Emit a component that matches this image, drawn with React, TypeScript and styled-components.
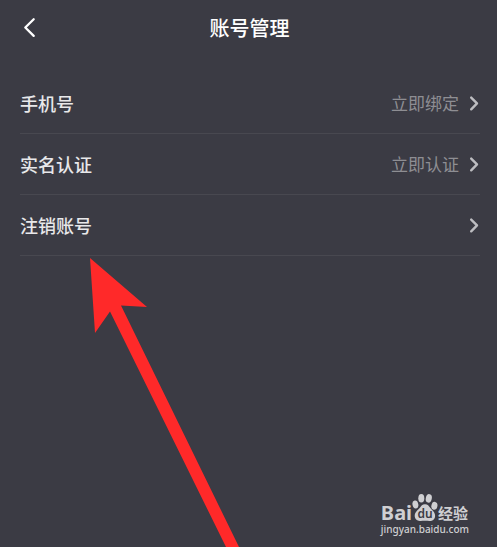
import React from "react";
import styled, { createGlobalStyle } from "styled-components";

const GlobalStyle = createGlobalStyle`
  *, *::before, *::after { box-sizing: border-box; }
  body {
    margin: 0;
    background: #3b3b44;
    font-family: "Noto Sans CJK SC", "Noto Sans", sans-serif;
  }
`;

const Page = styled.main`
  position: relative;
  display: flex;
  flex-direction: column;
  min-height: 100vh;
  overflow: hidden;
  background: #3b3b44;
`;

const Header = styled.header`
  display: grid;
  grid-template-columns: 40px 1fr 40px;
  align-items: center;
  height: 56px;
  padding: 0 8px 0 10px;
`;

const BackButton = styled.button`
  display: flex;
  align-items: center;
  justify-content: center;
  height: 40px;
  padding: 0;
  border: 0;
  background: none;
  color: #ffffff;
  cursor: pointer;
`;

const Title = styled.h1`
  margin: 0;
  color: #ffffff;
  font-size: 20px;
  font-weight: 500;
  line-height: 28px;
  text-align: center;
`;

const List = styled.ul`
  display: flex;
  flex-direction: column;
  margin: 0;
  padding: 17px 17px 0 20px;
  list-style: none;
`;

const Item = styled.li`
  border-bottom: 1px solid #484850;
`;

const RowButton = styled.button`
  display: flex;
  align-items: center;
  width: 100%;
  height: 60px;
  padding: 0;
  border: 0;
  background: none;
  font-family: inherit;
  line-height: 24px;
  text-align: left;
  cursor: pointer;
`;

const Label = styled.span`
  flex: 1;
  color: #e8e8ea;
  font-size: 18px;
  font-weight: 500;
`;

const Hint = styled.span`
  margin-right: 9px;
  color: #8e8e93;
  font-size: 17px;
`;

const Chevron = styled.svg`
  display: block;
  flex: none;
  color: #bdbdc1;
`;

const Pointer = styled.svg`
  position: absolute;
  top: 258px;
  left: 90px;
  pointer-events: none;
`;

const Watermark = styled.footer`
  display: flex;
  flex-direction: column;
  align-items: flex-start;
  align-self: flex-end;
  margin-top: auto;
  padding: 0 28px 11px 0;
  color: #cfcfd2;
`;

const Brand = styled.div`
  display: flex;
  align-items: flex-end;
  height: 29px;
`;

const BrandLatin = styled.span`
  font-family: "Noto Sans", sans-serif;
  font-size: 20px;
  font-weight: 700;
  line-height: 18px;
`;

const BrandChinese = styled.span`
  font-size: 15px;
  font-weight: 700;
  line-height: 18px;
`;

const Paw = styled.svg`
  display: block;
  flex: none;
`;

const Site = styled.a`
  color: inherit;
  font-family: "Noto Sans", sans-serif;
  font-size: 10px;
  font-weight: 500;
  line-height: 14px;
  text-decoration: none;
`;

const rows = [
  { label: "手机号", hint: "立即绑定" },
  { label: "实名认证", hint: "立即认证" },
  { label: "注销账号", hint: "" },
];

export default function App() {
  return (
    <>
      <GlobalStyle />
      <Page>
        <Header>
          <BackButton type="button" aria-label="返回">
            <svg width="14" height="22" viewBox="0 0 14 22" fill="none" aria-hidden="true">
              <path d="M10.7 2.2 2.3 10.5l8.4 8.4" stroke="currentColor" strokeWidth="2.3" strokeLinecap="round" strokeLinejoin="round" />
            </svg>
          </BackButton>
          <Title>账号管理</Title>
        </Header>
        <List>
          {rows.map(({ label, hint }) => (
            <Item key={label}>
              <RowButton type="button">
                <Label>{label}</Label>
                {hint && <Hint>{hint}</Hint>}
                <Chevron width="12" height="16" viewBox="0 0 12 16" fill="none" aria-hidden="true">
                  <path d="M3.2 2.6 9 8.4l-5.8 5.9" stroke="currentColor" strokeWidth="2.4" strokeLinecap="round" strokeLinejoin="round" />
                </Chevron>
              </RowButton>
            </Item>
          ))}
        </List>
        <Watermark>
          <Brand>
            <BrandLatin>Bai</BrandLatin>
            <Paw width="26" height="29" viewBox="0 0 26 29" fill="currentColor" aria-hidden="true">
              <ellipse cx="3.4" cy="11.5" rx="2.9" ry="4" transform="rotate(-12 3.4 11.5)" />
              <ellipse cx="9.3" cy="5.2" rx="3" ry="4.3" />
              <ellipse cx="16.8" cy="5.4" rx="3" ry="4.3" transform="rotate(12 16.8 5.4)" />
              <ellipse cx="22.4" cy="12.8" rx="3" ry="4" transform="rotate(12 22.4 12.8)" />
              <path d="M13 11.2c2.8 0 3.8 1.6 5.1 3.5 1.3 2 5 4 5 8 0 3.4-2.4 5.5-5.6 5.2-2.8-.3-6.2-.3-9 0-3.3.3-5.8-1.8-5.8-5.1 0-3.9 3.7-6 5.2-8.1 1.3-1.9 2.3-3.5 5.1-3.5Z" />
              <text x="13" y="25" textAnchor="middle" fill="#3b3b44" fontFamily="Noto Sans, sans-serif" fontSize="12" fontWeight="600">du</text>
            </Paw>
            <BrandChinese>经验</BrandChinese>
          </Brand>
          <Site href="#">jingyan.baidu.com</Site>
        </Watermark>
        <Pointer width="150" height="289" viewBox="0 0 150 289" aria-hidden="true">
          <path d="M0 0 57 49 31 47.5 149 289H136L20 53.5 5 75Z" fill="#ff2929" />
        </Pointer>
      </Page>
    </>
  );
}
